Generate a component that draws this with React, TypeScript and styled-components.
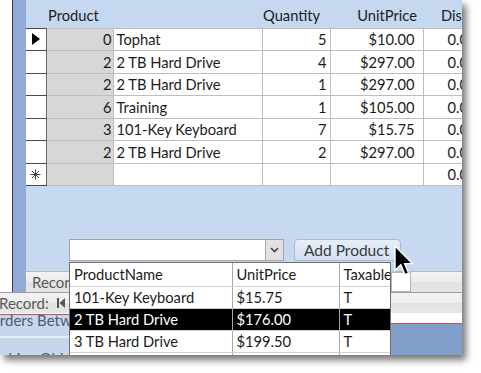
import React from "react";
import styled, { createGlobalStyle } from "styled-components";

const Global = createGlobalStyle`
  html, body { margin: 0; padding: 0; background: #ffffff; }
  body { font-family: Lato, "Liberation Sans", sans-serif; }
`;

const Page = styled.div`
  width: 481px;
  height: 373px;
  overflow: hidden;
  background: #ffffff;
`;

const Window = styled.div`
  position: relative;
  width: 462px;
  height: 355px;
  overflow: hidden;
  display: flex;
  flex-direction: column;
  background: #ffffff;
  box-shadow: 4px 5px 7px rgba(0, 0, 0, 0.55);
`;

const Upper = styled.div`
  display: flex;
  height: 292px;
  flex: none;
`;

const Gutter = styled.div`
  width: 12px;
  background: #ffffff;
  border-right: 1px solid #3e3e3e;
`;

const Strip = styled.div`
  width: 13px;
  background: #90acd6;
`;

const Subform = styled.div`
  flex: 1;
  min-width: 0;
  display: flex;
  flex-direction: column;
  background: #c6d9f1;
  overflow: hidden;
`;

const Sheet = styled.table`
  table-layout: fixed;
  border-collapse: collapse;
  width: 477px;
  font-size: 14.7px;
  color: #1c1c1c;
  flex: none;
`;

const Col = styled.col<{ $w: number }>`
  width: ${(p) => p.$w}px;
`;

const HeadCell = styled.th<{ $align?: string; $pad?: number }>`
  height: 28px;
  padding: 2px ${(p) => (p.$align === "right" ? p.$pad ?? 6 : 0)}px 0
    ${(p) => (p.$align === "right" ? 0 : p.$pad ?? 2)}px;
  text-align: ${(p) => p.$align ?? "left"};
  font-weight: normal;
  background: #c5d8f0;
  white-space: nowrap;
  overflow: hidden;
  box-sizing: border-box;
`;

const Row = styled.tr`
  height: 22.5px;
`;

const Selector = styled.td`
  background: #ffffff;
  border-top: 1px solid #4a4a4a;
  border-bottom: 1px solid #4a4a4a;
  border-right: 1px solid #6a6a6a;
  padding: 0;
  text-align: center;
  vertical-align: middle;
`;

const IdCell = styled.td`
  background: #d7d7d7;
  border: 1px solid #bdbdbd;
  text-align: right;
  padding: 0 1px 0 0;
  white-space: nowrap;
`;

const Cell = styled.td<{ $align?: string; $pl?: number; $pr?: number }>`
  background: #ffffff;
  border: 1px solid #bdbdbd;
  text-align: ${(p) => p.$align ?? "left"};
  padding: 0 ${(p) => p.$pr ?? 2}px 0 ${(p) => p.$pl ?? 2}px;
  white-space: nowrap;
  overflow: hidden;
`;

const Fill = styled.div`
  flex: 1;
  display: flex;
  align-items: flex-end;
  gap: 10px;
  padding: 0 0 10px 43px;
`;

const Combo = styled.div`
  display: flex;
  height: 22px;
  box-sizing: border-box;
  border: 1px solid #a3a3a3;
  background: #ffffff;
`;

const ComboInput = styled.div`
  width: 195px;
`;

const ComboArrow = styled.div`
  width: 17px;
  background: #e2e2e2;
  border-left: 1px solid #a9a9a9;
  display: flex;
  align-items: center;
  justify-content: center;
`;

const Button = styled.div`
  width: 107px;
  height: 22px;
  box-sizing: border-box;
  border: 1px solid #a6bad3;
  border-radius: 4px 4px 2px 2px;
  background: linear-gradient(#e6eef8, #d3e0f1);
  font-size: 15.5px;
  color: #3a3a3a;
  display: flex;
  align-items: center;
  padding-left: 9px;
  white-space: nowrap;
`;

const NavBar = styled.div<{ $sub?: boolean }>`
  height: 20px;
  flex: none;
  display: flex;
  align-items: center;
  gap: 8px;
  border-top: 1px solid ${(p) => (p.$sub ? "#b8b8b8" : "#9a9a9a")};
  background: linear-gradient(#f3f3f3 0%, #ececec 50%, #e2e2e2 51%, #e6e6e6 100%);
  padding-left: ${(p) => (p.$sub ? 6 : 0)}px;
  font-size: 15px;
  color: #595959;
  position: relative;
`;

const NavLabel = styled.span<{ $shift?: number }>`
  margin-left: ${(p) => p.$shift ?? 0}px;
  white-space: nowrap;
`;

const SearchBox = styled.div`
  position: absolute;
  left: 365px;
  top: 0;
  width: 18px;
  height: 18px;
  background: #ffffff;
  border: 1px solid #b5b5b5;
`;

const Bottom = styled.div`
  flex: 1;
  display: flex;
  min-height: 0;
`;

const LeftPane = styled.div`
  width: 69px;
  flex: none;
  display: flex;
  flex-direction: column;
  padding-top: 1px;
  background: #ffffff;
`;

const RedRule = styled.div`
  height: 1px;
  flex: none;
  background: #d24b4b;
`;

const PaneItem = styled.div<{ $h: number; $shift: number; $top: number }>`
  height: ${(p) => p.$h}px;
  flex: none;
  overflow: hidden;
  background: #c6d6ec;
  font-size: 15px;
  line-height: 22px;
  color: #4c5a72;
  white-space: nowrap;
  & > span {
    display: block;
    margin: ${(p) => p.$top}px 0 0 ${(p) => p.$shift}px;
  }
`;

const PaneGap = styled.div`
  height: 2px;
  flex: none;
  background: #e9eef6;
`;

const RightPane = styled.div`
  flex: 1;
  display: flex;
  flex-direction: column;
  padding-top: 10px;
  background: #ffffff;
`;

const DarkBlue = styled.div`
  flex: 1;
  background: #809fcb;
`;

const DropList = styled.div`
  position: absolute;
  left: 69px;
  top: 262px;
  width: 322px;
  height: 110px;
  box-sizing: border-box;
  border: 1px solid #6e6e6e;
  background: #ffffff;
  overflow: hidden;
`;

const ListTable = styled.table`
  table-layout: fixed;
  border-collapse: collapse;
  width: 330px;
  font-size: 14.7px;
  color: #1c1c1c;
`;

const ListRow = styled.tr<{ $sel?: boolean; $h?: number }>`
  height: ${(p) => p.$h ?? 22}px;
  background: ${(p) => (p.$sel ? "#000000" : "#ffffff")};
  color: ${(p) => (p.$sel ? "#ffffff" : "#1c1c1c")};
`;

const ListCell = styled.td`
  border-right: 1px solid #a8a8a8;
  border-bottom: 1px solid #d0d0d0;
  padding: 0 0 0 4px;
  white-space: nowrap;
  overflow: hidden;
`;

const Cursor = styled.svg`
  position: absolute;
  left: 394px;
  top: 245px;
`;

type Line = { sel?: "cur" | "new"; id?: string; name?: string; qty?: string; price?: string; disc: string };

const lines: Line[] = [
  { sel: "cur", id: "0", name: "Tophat", qty: "5", price: "$10.00", disc: "0.00%" },
  { id: "2", name: "2 TB Hard Drive", qty: "4", price: "$297.00", disc: "0.00%" },
  { id: "2", name: "2 TB Hard Drive", qty: "1", price: "$297.00", disc: "0.00%" },
  { id: "6", name: "Training", qty: "1", price: "$105.00", disc: "0.00%" },
  { id: "3", name: "101-Key Keyboard", qty: "7", price: "$15.75", disc: "0.00%" },
  { id: "2", name: "2 TB Hard Drive", qty: "2", price: "$297.00", disc: "0.00%" },
  { sel: "new", disc: "0.00%" },
];

const products = [
  { name: "101-Key Keyboard", price: "$15.75", tax: "T" },
  { name: "2 TB Hard Drive", price: "$176.00", tax: "T", sel: true },
  { name: "3 TB Hard Drive", price: "$199.50", tax: "T" },
];

const Arrow = () => (
  <svg width="8" height="12" viewBox="0 0 8 12">
    <polygon points="0,0 8,6 0,12" fill="#000" />
  </svg>
);

const NewMark = () => (
  <svg width="11" height="11" viewBox="0 0 11 11" stroke="#444" strokeWidth="1">
    <line x1="5.5" y1="0.5" x2="5.5" y2="10.5" />
    <line x1="0.5" y1="5.5" x2="10.5" y2="5.5" />
    <line x1="2" y1="2" x2="9" y2="9" />
    <line x1="9" y1="2" x2="2" y2="9" />
  </svg>
);

const FirstIcon = () => (
  <svg width="8" height="10" viewBox="0 0 8 10">
    <rect x="0" y="0" width="2" height="10" fill="#555" />
    <polygon points="8,0 2.5,5 8,10" fill="#555" />
  </svg>
);

export default function App() {
  return (
    <Page>
      <Global />
      <Window>
        <Upper>
          <Gutter />
          <Strip />
          <Subform>
            <Sheet>
              <colgroup>
                <Col $w={20} />
                <Col $w={67} />
                <Col $w={149} />
                <Col $w={68} />
                <Col $w={93} />
                <Col $w={80} />
              </colgroup>
              <thead>
                <tr>
                  <HeadCell />
                  <HeadCell colSpan={2}>Product</HeadCell>
                  <HeadCell $pad={1}>Quantity</HeadCell>
                  <HeadCell $align="right" $pad={6}>UnitPrice</HeadCell>
                  <HeadCell $pad={18}>Discount</HeadCell>
                </tr>
              </thead>
              <tbody>
                {lines.map((l, i) => (
                  <Row key={i}>
                    <Selector>{l.sel === "cur" ? <Arrow /> : l.sel === "new" ? <NewMark /> : null}</Selector>
                    <IdCell>{l.id}</IdCell>
                    <Cell $pl={3}>{l.name}</Cell>
                    <Cell $align="right" $pr={3}>{l.qty}</Cell>
                    <Cell $align="right" $pr={8}>{l.price}</Cell>
                    <Cell $pl={24}>{l.disc}</Cell>
                  </Row>
                ))}
              </tbody>
            </Sheet>
            <Fill>
              <Combo>
                <ComboInput />
                <ComboArrow>
                  <svg width="9" height="6" viewBox="0 0 9 6">
                    <polyline points="1,1 4.5,4.5 8,1" fill="none" stroke="#444" strokeWidth="1.6" />
                  </svg>
                </ComboArrow>
              </Combo>
              <Button>Add Product</Button>
            </Fill>
            <NavBar $sub>
              <NavLabel>Record:</NavLabel>
              <SearchBox />
            </NavBar>
          </Subform>
        </Upper>
        <NavBar>
          <NavLabel $shift={-1}>Record:</NavLabel>
          <FirstIcon />
        </NavBar>
        <Bottom>
          <LeftPane>
            <RedRule />
            <PaneItem $h={21} $shift={-12} $top={-6}>
              <span>Orders Between Dates</span>
            </PaneItem>
            <PaneGap />
            <PaneItem $h={17} $shift={-14} $top={9}>
              <span>Archive Old Orders</span>
            </PaneItem>
          </LeftPane>
          <RightPane>
            <RedRule />
            <DarkBlue />
          </RightPane>
        </Bottom>
        <DropList>
          <ListTable>
            <colgroup>
              <Col $w={162} />
              <Col $w={107} />
              <Col $w={61} />
            </colgroup>
            <tbody>
              <ListRow $h={23}>
                <ListCell>ProductName</ListCell>
                <ListCell>UnitPrice</ListCell>
                <ListCell>Taxable</ListCell>
              </ListRow>
              {products.map((p, i) => (
                <ListRow key={i} $sel={p.sel}>
                  <ListCell>{p.name}</ListCell>
                  <ListCell>{p.price}</ListCell>
                  <ListCell>{p.tax}</ListCell>
                </ListRow>
              ))}
              <ListRow>
                <ListCell>4 TB Hard Drive</ListCell>
                <ListCell>$249.00</ListCell>
                <ListCell>T</ListCell>
              </ListRow>
            </tbody>
          </ListTable>
        </DropList>
        <Cursor width="20" height="32" viewBox="0 0 13 21">
          <path d="M0.6 0.6 L0.6 16.8 L4.4 13 L7.1 19.4 L9.5 18.4 L6.9 12.2 L12 12.2 Z" fill="#000" stroke="#fff" strokeWidth="0.9" />
        </Cursor>
      </Window>
    </Page>
  );
}
